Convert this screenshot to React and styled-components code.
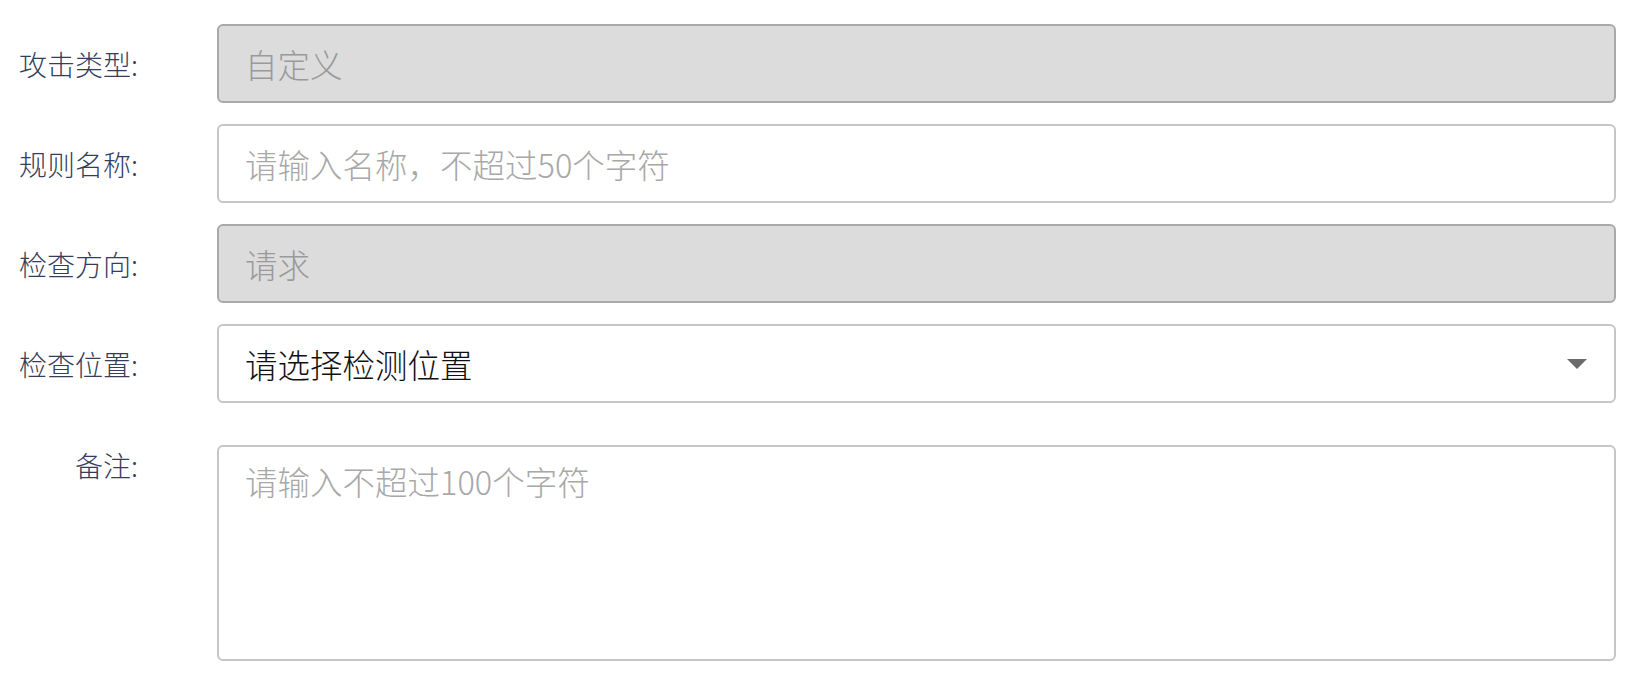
import React from "react";
import styled, { createGlobalStyle, css } from "styled-components";

const Global = createGlobalStyle`
  html, body {
    margin: 0;
    padding: 0;
    background: #ffffff;
  }
  body {
    font-family: "PingFang SC", "Noto Sans CJK SC", "Noto Sans", sans-serif;
  }
`;

const Form = styled.form`
  display: flex;
  flex-direction: column;
  gap: 21px;
  padding: 24px 20px 0 0;
`;

const Row = styled.div`
  display: grid;
  grid-template-columns: 138px 1fr;
  column-gap: 79px;
  align-items: ${(p) => (p.$top ? "start" : "center")};
  margin-top: ${(p) => (p.$spaced ? "21px" : "0")};
`;

const Label = styled.label`
  font-size: 28px;
  font-weight: 300;
  line-height: 40px;
  color: #353d5e;
  text-align: right;
  white-space: nowrap;
`;

const fieldBase = css`
  box-sizing: border-box;
  width: 100%;
  margin: 0;
  border-radius: 6px;
  font-family: "PingFang SC", "Noto Sans CJK SC", "Noto Sans", sans-serif;
  font-size: 32.5px;
  font-weight: 300;
  outline: none;
  &::placeholder {
    color: #a8a8a8;
    -webkit-text-fill-color: #a8a8a8;
    opacity: 1;
  }
`;

const Input = styled.input`
  ${fieldBase}
  height: 79px;
  padding: 0 26px;
  border: 2px solid #c6c6c6;
  background: #ffffff;
  color: #1f1f1f;
  &:disabled {
    border-color: #a9a9a9;
    background: #dcdcdc;
    color: #9a9a9a;
    -webkit-text-fill-color: #9a9a9a;
    opacity: 1;
  }
`;

const SelectBox = styled.div`
  ${fieldBase}
  height: 79px;
  padding: 0 27px 0 26px;
  border: 2px solid #c6c6c6;
  background: #ffffff;
  color: #111111;
  display: flex;
  align-items: center;
  justify-content: space-between;
  cursor: pointer;
`;

const Caret = styled.svg`
  width: 20px;
  height: 10px;
  flex: none;
`;

const TextArea = styled.textarea`
  ${fieldBase}
  display: block;
  height: 216px;
  padding: 10px 26px;
  line-height: 1.5;
  border: 2px solid #c6c6c6;
  background: #ffffff;
  color: #1f1f1f;
  resize: none;
`;

export default function App() {
  return (
    <>
      <Global />
      <Form onSubmit={(e) => e.preventDefault()}>
        <Row>
          <Label>攻击类型:</Label>
          <Input disabled value="自定义" readOnly />
        </Row>
        <Row>
          <Label>规则名称:</Label>
          <Input placeholder="请输入名称，不超过50个字符" />
        </Row>
        <Row>
          <Label>检查方向:</Label>
          <Input disabled value="请求" readOnly />
        </Row>
        <Row>
          <Label>检查位置:</Label>
          <SelectBox>
            <span>请选择检测位置</span>
            <Caret viewBox="0 0 20 10">
              <path d="M0 0 L20 0 L10 10 Z" fill="#6b6b6b" />
            </Caret>
          </SelectBox>
        </Row>
        <Row $top $spaced>
          <Label>备注:</Label>
          <TextArea placeholder="请输入不超过100个字符" />
        </Row>
      </Form>
    </>
  );
}
